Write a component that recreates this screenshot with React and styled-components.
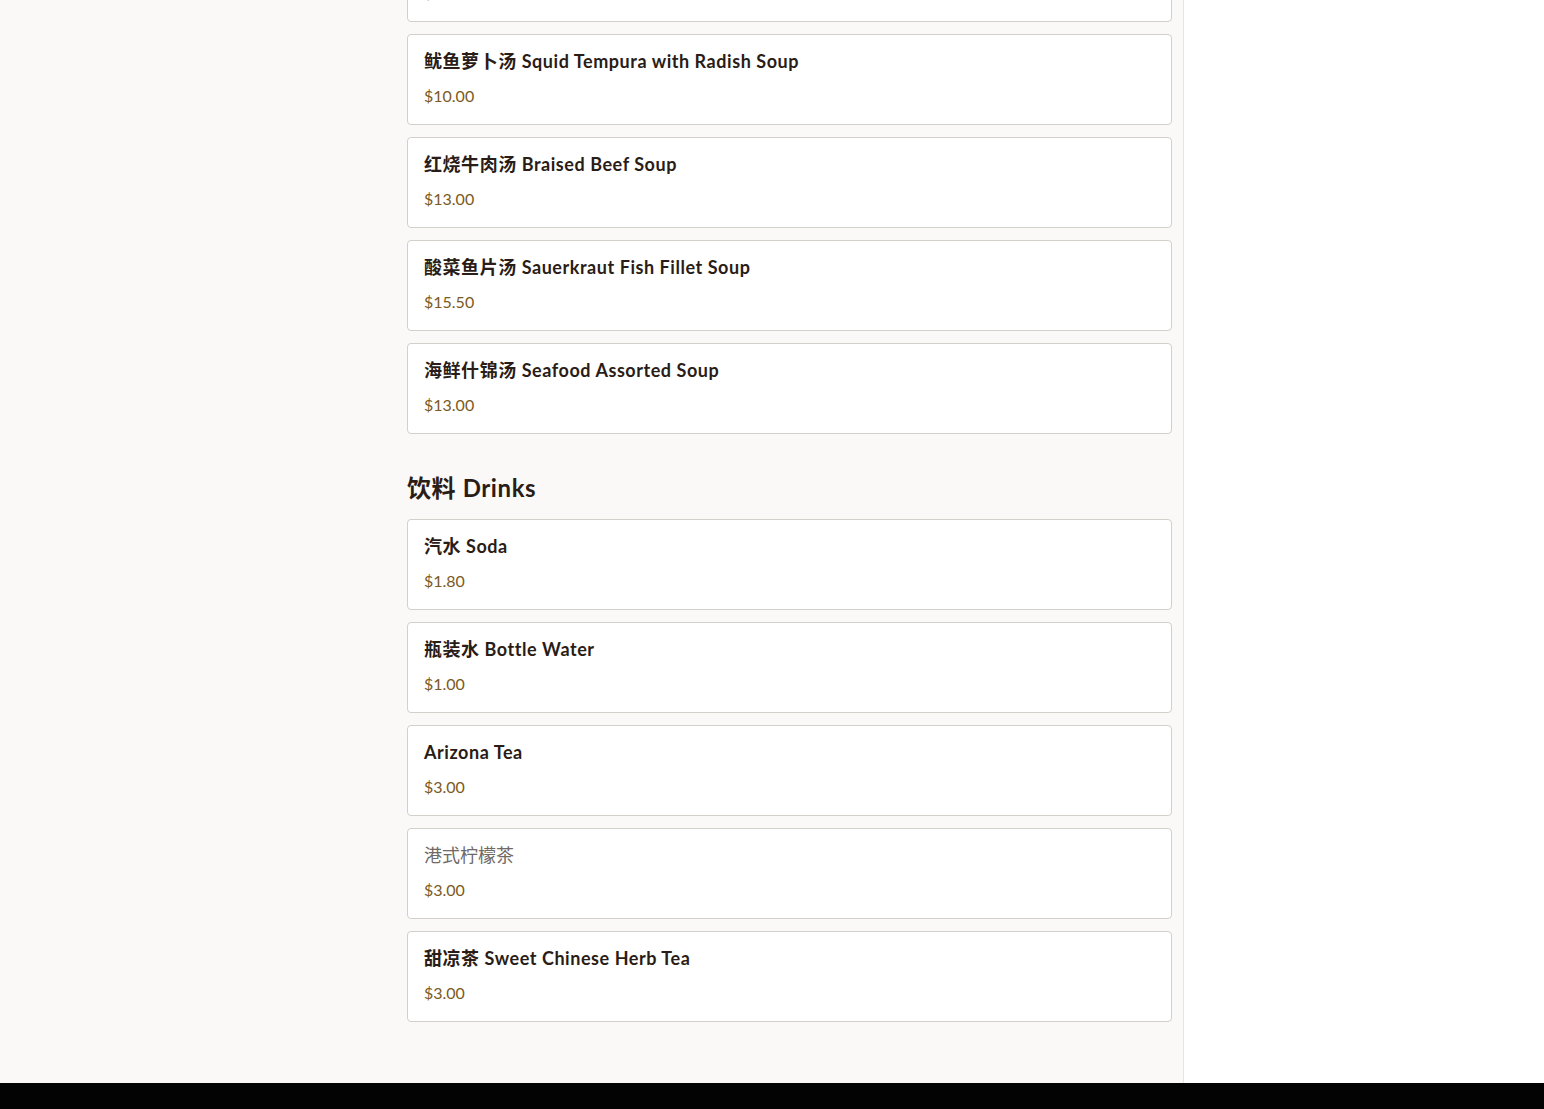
import React, { useLayoutEffect, useRef } from "react";
import styled, { createGlobalStyle } from "styled-components";

const menu = [
  {
    title: "汤类 Soups",
    items: [
      { name: "冬瓜排骨汤 Winter Melon Pork Rib Soup", price: 12 },
      { name: "西红柿蛋汤 Tomato Egg Drop Soup", price: 9.5 },
      { name: "鱿鱼萝卜汤 Squid Tempura with Radish Soup", price: 10, anchor: true },
      { name: "红烧牛肉汤 Braised Beef Soup", price: 13 },
      { name: "酸菜鱼片汤 Sauerkraut Fish Fillet Soup", price: 15.5 },
      { name: "海鲜什锦汤 Seafood Assorted Soup", price: 13 },
    ],
  },
  {
    title: "饮料 Drinks",
    items: [
      { name: "汽水 Soda", price: 1.8 },
      { name: "瓶装水 Bottle Water", price: 1 },
      { name: "Arizona Tea", price: 3 },
      { name: "港式柠檬茶", price: 3, plain: true },
      { name: "甜凉茶 Sweet Chinese Herb Tea", price: 3 },
    ],
  },
];

export default function App() {
  const paneRef = useRef(null);
  const anchorRef = useRef(null);

  useLayoutEffect(() => {
    // the menu is shown scrolled down to the soups
    if (paneRef.current && anchorRef.current) {
      paneRef.current.scrollTop = anchorRef.current.offsetTop - 34;
    }
  }, []);

  return (
    <>
      <GlobalStyle />
      <Page>
        <Body>
          <MenuPane ref={paneRef}>
            <Column>
              {menu.map((section) => (
                <Section key={section.title}>
                  <SectionTitle>{section.title}</SectionTitle>
                  <ItemList>
                    {section.items.map((item) => (
                      <ItemCard key={item.name} ref={item.anchor ? anchorRef : null}>
                        <ItemName $plain={item.plain}>{item.name}</ItemName>
                        <Price>${item.price.toFixed(2)}</Price>
                      </ItemCard>
                    ))}
                  </ItemList>
                </Section>
              ))}
            </Column>
          </MenuPane>
          <CartPane />
        </Body>
        <Footer />
      </Page>
    </>
  );
}

const GlobalStyle = createGlobalStyle`
  html, body, #root {
    margin: 0;
    height: 100%;
  }
  body {
    font-family: Lato, "Noto Sans", "Noto Sans CJK SC", sans-serif;
    background: #ffffff;
  }
`;

const Page = styled.div`
  height: 100vh;
  display: flex;
  flex-direction: column;
`;

const Body = styled.div`
  flex: 1;
  min-height: 0;
  display: flex;
`;

const MenuPane = styled.div`
  width: 1183px;
  flex-shrink: 0;
  background: #faf9f7;
  border-right: 1px solid #e8e5e1;
  overflow-y: auto;
  scrollbar-width: none;
  &::-webkit-scrollbar {
    display: none;
  }
`;

const CartPane = styled.div`
  flex: 1;
  background: #ffffff;
`;

const Column = styled.div`
  width: 765px;
  margin: 0 11px 0 auto;
  padding: 24px 0 62px;
  display: flex;
  flex-direction: column;
  gap: 38px;
`;

const Section = styled.section`
  display: flex;
  flex-direction: column;
`;

const SectionTitle = styled.h2`
  margin: 0 0 15px;
  font-size: 24px;
  line-height: 32px;
  font-weight: 700;
  letter-spacing: 0.6px;
  color: #2a1c16;
`;

const ItemList = styled.div`
  display: flex;
  flex-direction: column;
  gap: 12px;
`;

const ItemCard = styled.div`
  background: #ffffff;
  border: 1px solid #d3cfcb;
  border-radius: 4px;
  padding: 15px 16px 16px;
  display: flex;
  flex-direction: column;
  gap: 12px;
`;

const ItemName = styled.div`
  font-size: 18px;
  line-height: 22px;
  font-weight: ${(p) => (p.$plain ? 400 : 700)};
  letter-spacing: ${(p) => (p.$plain ? "0" : "0.55px")};
  color: ${(p) => (p.$plain ? "#6f6a66" : "#2a1c16")};
`;

const Price = styled.div`
  font-size: 16px;
  line-height: 24px;
  color: #7b5a22;
`;

const Footer = styled.div`
  height: 26px;
  flex-shrink: 0;
  background: #030303;
`;
